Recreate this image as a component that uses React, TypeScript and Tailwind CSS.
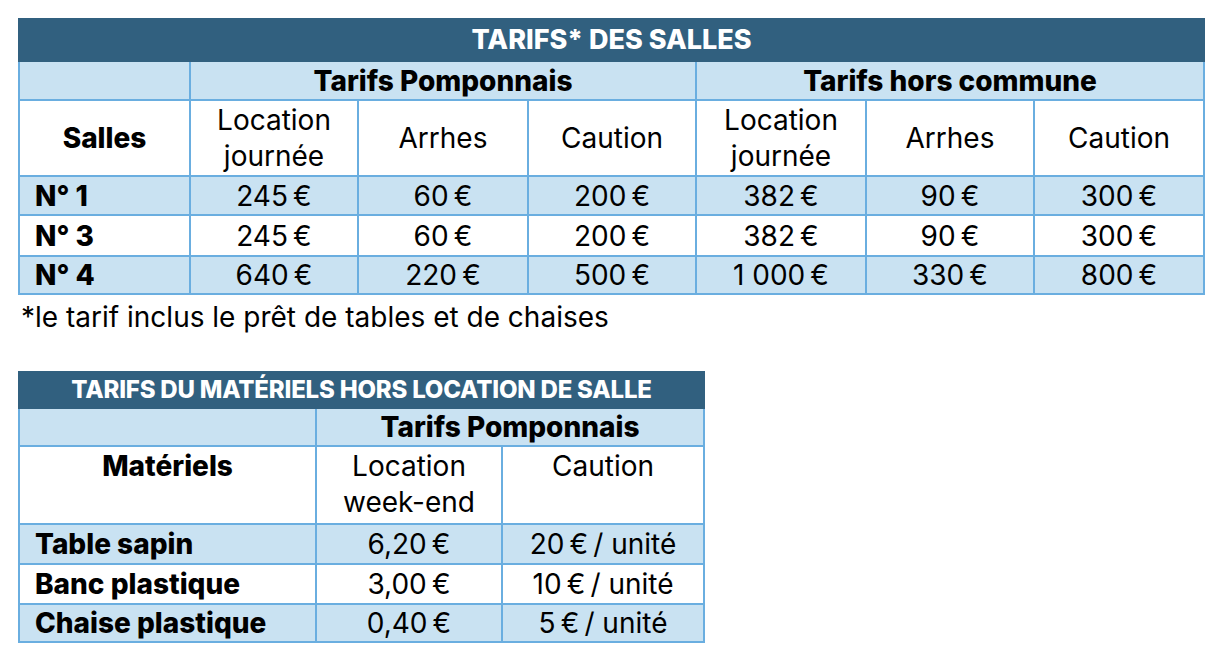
import React from "react";

const cellB = "border-2 border-[#6aaee0]";
const S = "\u202f";

export default function App() {
  const rows1 = [
    { n: "N° 1", v: ["245", "60", "200", "382", "90", "300"], bg: "bg-[#c9e2f2]", h: "h-[39px]" },
    { n: "N° 3", v: ["245", "60", "200", "382", "90", "300"], bg: "bg-white", h: "h-[41px]" },
    { n: "N° 4", v: ["640", "220", "500", "1\u00a0000", "330", "800"], bg: "bg-[#c9e2f2]", h: "h-[37px]" },
  ];
  const rows2 = [
    { n: "Table sapin", a: "6,20", b: "20", bg: "bg-[#c9e2f2]", h: "h-[40px]" },
    { n: "Banc plastique", a: "3,00", b: "10", bg: "bg-white", h: "h-[40px]" },
    { n: "Chaise plastique", a: "0,40", b: "5", bg: "bg-[#c9e2f2]", h: "h-[37px]" },
  ];
  return (
    <div className="min-h-[656px] w-[1228px] bg-white pl-[18px] pt-[18px] font-['Inter',sans-serif] text-[28px] leading-[36px] text-black">
      <table className="w-[1185px] table-fixed border-collapse">
        <colgroup>
          <col className="w-[171px]" />
          <col className="w-[168px]" />
          <col className="w-[170px]" />
          <col className="w-[168px]" />
          <col className="w-[170px]" />
          <col className="w-[168px]" />
          <col className="w-[170px]" />
        </colgroup>
        <tbody>
          <tr className="h-[42px]">
            <td colSpan={7} className="border-2 border-[#31607f] bg-[#31607f] p-0 text-center text-[27px] font-extrabold leading-[30px] text-white">
              TARIFS* DES SALLES
            </td>
          </tr>
          <tr className="h-[39px] bg-[#c9e2f2]">
            <td className={`${cellB} p-0`}></td>
            <td colSpan={3} className={`${cellB} p-0 text-center font-extrabold`}>
              Tarifs Pomponnais
            </td>
            <td colSpan={3} className={`${cellB} p-0 text-center font-extrabold`}>
              Tarifs hors commune
            </td>
          </tr>
          <tr className="h-[76px] bg-white">
            <td className={`${cellB} p-0 text-center font-extrabold`}>Salles</td>
            <td className={`${cellB} p-0 text-center`}>
              Location
              <br />
              journée
            </td>
            <td className={`${cellB} p-0 text-center`}>Arrhes</td>
            <td className={`${cellB} p-0 text-center`}>Caution</td>
            <td className={`${cellB} p-0 text-center`}>
              Location
              <br />
              journée
            </td>
            <td className={`${cellB} p-0 text-center`}>Arrhes</td>
            <td className={`${cellB} p-0 text-center`}>Caution</td>
          </tr>
          {rows1.map((r) => (
            <tr key={r.n} className={`${r.h} ${r.bg}`}>
              <td className={`${cellB} py-0 pl-[15px] text-left font-extrabold`}>{r.n}</td>
              {r.v.map((v, i) => (
                <td key={i} className={`${cellB} p-0 text-center`}>
                  {v}
                  {S}€
                </td>
              ))}
            </tr>
          ))}
        </tbody>
      </table>
      <div className="mt-[4px] pl-[3px]">*le tarif inclus le prêt de tables et de chaises</div>
      <table className="mt-[36px] w-[685px] table-fixed border-collapse">
        <colgroup>
          <col className="w-[297px]" />
          <col className="w-[186px]" />
          <col className="w-[202px]" />
        </colgroup>
        <tbody>
          <tr className="h-[36px]">
            <td colSpan={3} className="border-2 border-[#31607f] bg-[#31607f] p-0 text-center text-[24px] font-extrabold leading-[28px] tracking-[-0.2px] text-white">
              TARIFS DU MATÉRIELS HORS LOCATION DE SALLE
            </td>
          </tr>
          <tr className="h-[37px] bg-[#c9e2f2]">
            <td className={`${cellB} p-0`}></td>
            <td colSpan={2} className={`${cellB} p-0 text-center font-extrabold`}>
              Tarifs Pomponnais
            </td>
          </tr>
          <tr className="h-[78px] bg-white">
            <td className={`${cellB} p-0 pt-[1px] text-center align-top font-extrabold`}>Matériels</td>
            <td className={`${cellB} p-0 pt-[1px] text-center align-top`}>
              Location
              <br />
              week-end
            </td>
            <td className={`${cellB} p-0 pt-[1px] text-center align-top`}>Caution</td>
          </tr>
          {rows2.map((r) => (
            <tr key={r.n} className={`${r.h} ${r.bg}`}>
              <td className={`${cellB} py-0 pl-[15px] text-left font-extrabold`}>{r.n}</td>
              <td className={`${cellB} p-0 text-center`}>
                {r.a}
                {S}€
              </td>
              <td className={`${cellB} p-0 text-center`}>
                {r.b}
                {S}€{S}/ unité
              </td>
            </tr>
          ))}
        </tbody>
      </table>
    </div>
  );
}
